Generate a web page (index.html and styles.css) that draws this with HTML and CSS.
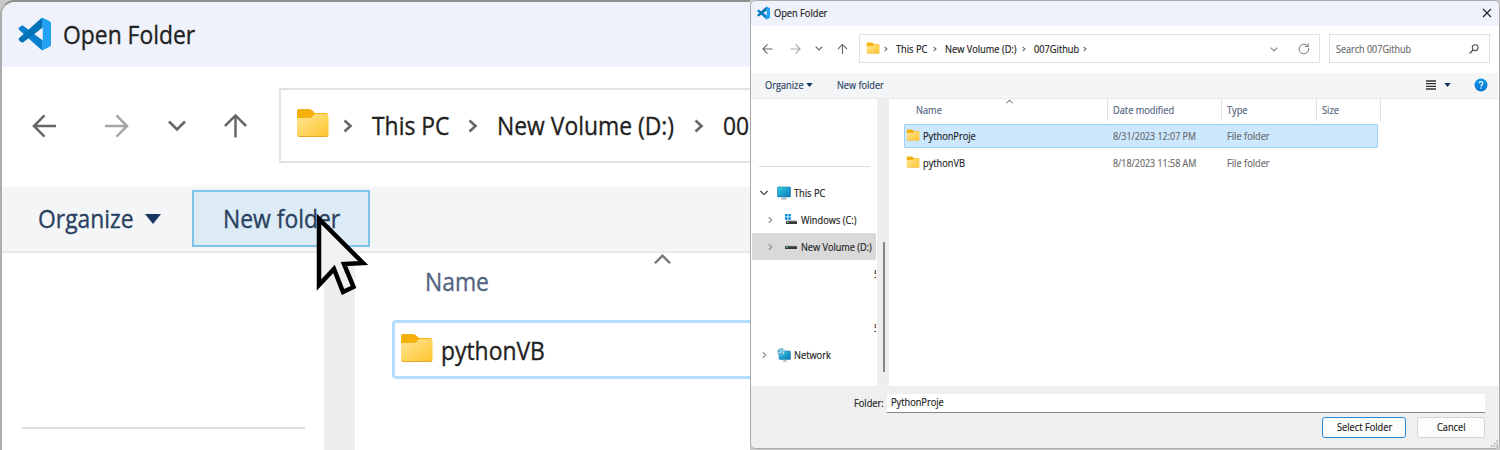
FILE: index.html
```html
<!DOCTYPE html>
<html lang="en">
<head>
<meta charset="utf-8">
<title>Open Folder</title>
<link rel="stylesheet" href="styles.css">
</head>
<body>
<svg width="0" height="0" class="defs">
  <defs>
    <linearGradient id="gold" x1="0" y1="0" x2="1" y2="1"><stop offset="0" stop-color="#ffe694"/><stop offset="1" stop-color="#ffc52d"/></linearGradient>
    <linearGradient id="screen" x1="0" y1="0" x2="1" y2="1"><stop offset="0" stop-color="#35d0e4"/><stop offset="1" stop-color="#0873b8"/></linearGradient>
    <linearGradient id="help" x1="0" y1="0" x2="0" y2="1"><stop offset="0" stop-color="#0b9ae4"/><stop offset="1" stop-color="#0874cf"/></linearGradient>
    <symbol id="folder" viewBox="0 0 33 30">
      <path d="M1 3Q1 1 3 1H13Q15 1 17 3L19 5H30Q32 5 32 7V14H1Z" fill="#f4b00c"/>
      <path d="M1 10H14Q16 10 18 7Q18.600 6 20 6H31Q32.500 6 32.500 8V26Q32.500 29 30 29H3.500Q1 29 1 26Z" fill="url(#gold)"/>
      <path d="M1.500 27Q2 28.500 4 28.500H30Q32 28.500 32 27" stroke="#e8a72a" fill="none"/>
    </symbol>
    <symbol id="code" viewBox="0 0 100 100">
      <path d="M3 31L10 25Q13 23 16 25L75 70V98Q70 98 67 95L3 37Q0 34 3 31Z" fill="#0a7fd0"/>
      <path d="M3 69L10 75Q13 77 16 75L75 30V2Q70 2 67 5L3 63Q0 66 3 69Z" fill="#0072b5"/>
      <path d="M68 96Q72 101 78 98L96 89Q100 87 100 82V18Q100 13 96 11L78 2Q72 -1 68 4Q75 3 75 10V90Q75 97 68 96Z" fill="#22a2f2"/>
    </symbol>
    <symbol id="back" viewBox="0 0 26 24"><path d="M25 12H2M13 1L2 12L13 23" fill="none" stroke="currentColor" stroke-width="2.600"/></symbol>
    <symbol id="down" viewBox="0 0 18 12"><path d="M1 1.500L9 9.500L17 1.500" fill="none" stroke="currentColor" stroke-width="2.600"/></symbol>
    <symbol id="right" viewBox="0 0 10 14"><path d="M1.500 1.500L7.500 7L1.500 12.500" fill="none" stroke="currentColor" stroke-width="2.600"/></symbol>
    <symbol id="caret" viewBox="0 0 16 10"><path d="M0 0H16L8 10Z" fill="#17365f"/></symbol>
    <symbol id="pc" viewBox="0 0 14 14">
      <rect x=".5" y="1" width="13" height="10" rx=".8" fill="url(#screen)" stroke="#17739a" stroke-width=".6"/>
      <path d="M5.500 11.500H8.500V12.700H10V13.500H4V12.700H5.500Z" fill="#9badb8"/>
    </symbol>
    <symbol id="drive" viewBox="0 0 12 5"><path d="M1.500 0H10.500L12 1.500H0Z" fill="#c8c8c8"/><path d="M0 1.300H12V4H0Z" fill="#383838"/><rect x="1" y="2" width="2" height="1" fill="#42bd61"/></symbol>
  </defs>
</svg>
<main class="board">
  <section class="dialog large">
    <header class="title"><svg class="logo"><use href="#code"/></svg><span class="t">Open Folder</span></header>
    <nav class="nav">
      <svg class="arrow"><use href="#back"/></svg>
      <svg class="arrow flip"><use href="#back"/></svg>
      <svg class="chev"><use href="#down"/></svg>
      <svg class="arrow up"><use href="#back"/></svg>
      <div class="address">
        <svg class="folder"><use href="#folder"/></svg>
        <svg class="sep"><use href="#right"/></svg><span class="t pc">This PC</span>
        <svg class="sep"><use href="#right"/></svg><span class="t vol">New Volume (D:)</span>
        <svg class="sep"><use href="#right"/></svg><span class="t">007Github</span>
      </div>
    </nav>
    <div class="tools">
      <span class="t organize">Organize</span><svg class="caret"><use href="#caret"/></svg>
      <button class="hot"><span class="t">New folder</span></button>
      <svg class="pointer" viewBox="0 0 54 82"><path d="M5 6V72L20 56L29 79L39.500 74L30 51L49 50Z" fill="#eff1f3" stroke="#000" stroke-width="4.500"/></svg>
    </div>
    <div class="body">
      <aside class="side"><hr></aside>
      <div class="track"></div>
      <div class="files">
        <svg class="sort"><use href="#down"/></svg>
        <div class="heading"><span class="t">Name</span></div>
        <div class="file"><svg class="folder"><use href="#folder"/></svg><span class="t">pythonVB</span></div>
      </div>
    </div>
  </section>

  <section class="dialog small">
    <header class="title"><svg class="logo"><use href="#code"/></svg><span class="t">Open Folder</span>
      <svg class="close" viewBox="0 0 10 10"><path d="M1 1L9 9M9 1L1 9" stroke="#222" stroke-width="1.100"/></svg></header>
    <nav class="nav">
      <svg class="arrow"><use href="#back"/></svg>
      <svg class="arrow flip"><use href="#back"/></svg>
      <svg class="chev"><use href="#down"/></svg>
      <svg class="arrow up"><use href="#back"/></svg>
      <div class="address">
        <svg class="folder"><use href="#folder"/></svg>
        <svg class="sep"><use href="#right"/></svg><span class="t pc">This PC</span>
        <svg class="sep"><use href="#right"/></svg><span class="t vol">New Volume (D:)</span>
        <svg class="sep"><use href="#right"/></svg><span class="t git">007Github</span>
        <svg class="sep"><use href="#right"/></svg>
        <svg class="chev drop"><use href="#down"/></svg>
        <svg class="reload" viewBox="0 0 12 12"><path d="M10.600 5.200A4.800 4.800 0 1 1 8.800 2.200L10.300 3.500M10.300 .5V3.600H7.200" fill="none" stroke="#777"/></svg>
      </div>
      <div class="search"><span class="t">Search 007Github</span>
        <svg class="lens" viewBox="0 0 10 10"><circle cx="6.200" cy="3.700" r="2.900" fill="none" stroke="#555" stroke-width="1.100"/><path d="M4.200 5.800L.7 9.400" stroke="#555" stroke-width="1.400"/></svg></div>
    </nav>
    <div class="tools">
      <span class="t organize">Organize</span><svg class="caret"><use href="#caret"/></svg>
      <span class="t newf">New folder</span>
      <svg class="lines" viewBox="0 0 10 10"><path d="M0 1H10M0 3.600H10M0 6.300H10M0 9H10" stroke="#333" stroke-width="1.300"/></svg>
      <svg class="caret view"><use href="#caret"/></svg>
      <svg class="help" viewBox="0 0 14 14"><circle cx="7" cy="7" r="6.500" fill="url(#help)"/><path d="M5.200 5.300Q5.300 3.700 7 3.700T8.800 5.300Q8.700 6.300 7.700 6.900Q7 7.400 7 8.400M7 9.500V10.700" fill="none" stroke="#fff" stroke-width="1.200"/></svg>
    </div>
    <div class="body">
      <aside class="side">
        <hr>
        <div class="node"><svg class="chev open"><use href="#down"/></svg><svg class="pcicon"><use href="#pc"/></svg><span class="t">This PC</span></div>
        <div class="node sub"><svg class="sep"><use href="#right"/></svg>
          <svg class="win" viewBox="0 0 12 12"><path d="M0 1H2.500V3.500H0ZM3.300 1H5.800V3.500H3.300ZM0 4.300H2.500V6.800H0ZM3.300 4.300H5.800V6.800H3.300Z" fill="#078bdd"/><path d="M2 7H10.500L12 8.500H1Z" fill="#c8c8c8"/><path d="M1 8.200H12V11H1Z" fill="#383838"/><rect x="2" y="9" width="2" height="1" fill="#42bd61"/></svg>
          <span class="t">Windows (C:)</span></div>
        <div class="node sub chosen"><svg class="sep"><use href="#right"/></svg><svg class="drive"><use href="#drive"/></svg><span class="t">New Volume (D:)</span></div>
        <div class="node cut"><span class="t">5</span></div>
        <div class="node"></div>
        <div class="node cut"><span class="t">5</span></div>
        <div class="node net"><svg class="sep"><use href="#right"/></svg>
          <svg class="pcicon" viewBox="0 0 14 14"><rect x="2" y="3" width="11.500" height="8.500" rx=".8" fill="url(#screen)" stroke="#17739a" stroke-width=".5"/><path d="M6.500 11.700H9V12.900H10.500V13.600H5V12.900H6.500Z" fill="#9badb8"/><circle cx="4.200" cy="4" r="3.700" fill="#54aed3"/><path d="M2 1.500L4.500 2.500L3.500 5L1 4.500M5.500 1L7 3L6 6" fill="none" stroke="#c5e9f1"/></svg>
          <span class="t">Network</span></div>
      </aside>
      <div class="track"><div class="thumb"></div></div>
      <div class="files">
        <svg class="sort"><use href="#down"/></svg>
        <div class="cols heading"><span class="t">Name</span><span class="cell"><span class="t">Date modified</span></span><span class="cell"><span class="t">Type</span></span><span class="cell"><span class="t">Size</span></span><span class="cell"></span></div>
        <div class="cols file picked"><svg class="folder"><use href="#folder"/></svg><span class="t">PythonProje</span><span class="t meta date">8/31/2023 12:07 PM</span><span class="t meta">File folder</span></div>
        <div class="cols file"><svg class="folder"><use href="#folder"/></svg><span class="t">pythonVB</span><span class="t meta date">8/18/2023 11:58 AM</span><span class="t meta">File folder</span></div>
      </div>
    </div>
    <footer class="foot">
      <div class="entry"><span class="t label">Folder:</span><div class="input"><span class="t">PythonProje</span></div></div>
      <div class="actions"><button class="btn main"><span class="t">Select Folder</span></button><button class="btn"><span class="t">Cancel</span></button></div>
      <svg class="grip" viewBox="0 0 8 8"><path d="M6 0H8V2H6ZM3 3H5V5H3ZM6 3H8V5H6ZM0 6H2V8H0ZM3 6H5V8H3ZM6 6H8V8H6Z" fill="#bbb"/></svg>
    </footer>
  </section>
</main>
</body>
</html>
```

FILE: styles.css
```css
* { box-sizing: border-box; }
body { margin: 0; font-family: "Open Sans", "Noto Sans", sans-serif; color: #222; }
svg, .t { display: block; flex: none; }
.defs { position: absolute; }
.board { display: flex; width: 1500px; height: 450px; overflow: hidden; background: #c9c9c9; }
.dialog { flex: none; display: flex; flex-direction: column; overflow: hidden; background: #fff; }
.t { white-space: nowrap; transform: scaleX(var(--sx)); transform-origin: 0 50%; -webkit-text-stroke: var(--ink) currentColor; }
.title, .nav, .tools, .address, .search, .file, .node, .entry, .actions { display: flex; align-items: center; flex: none; }
.title { background: #eff2fb; }
.tools { background: #f4f5f7; color: #29415f; position: relative; }
.body { display: flex; flex: 1; min-height: 0; }
.side, .track, .files { flex: none; }
.track { background: #eee; }
.flip { transform: scaleX(-1); }
.up { transform: rotate(90deg); }
.arrow, .chev { color: #666; }
.flip.arrow { color: #a5a5a5; }
.sep { color: #666; }
.heading { color: #536480; }
hr { border: 0; background: #dcdcdc; margin: 0; }
button { font: inherit; color: inherit; padding: 0; display: flex; align-items: center; }

/* magnified dialog */
.large { --sx: .88; --ink: .35px; width: 750px; height: 450px; font-size: 26px; line-height: 36px; border-left: 2px solid #adadad; border-top: 2px solid #8e8e8e; border-top-left-radius: 15px; }
.large .title { height: 65px; padding: 0 0 1px 16px; }
.large .logo { width: 33px; height: 36px; margin-right: 12px; }
.large .nav { height: 120px; padding: 0 0 3px 30px; }
.large .arrow { width: 25px; height: 24px; margin-right: 47px; }
.large .arrow.flip { margin-right: 39px; }
.large .chev { width: 18px; height: 12px; margin-right: 37px; }
.large .arrow.up { margin-right: 31px; }
.large .address { width: 700px; height: 75px; border: 2px solid #e2e2e2; padding: 0 0 2px 15px; flex: none; }
.large .folder { width: 33px; height: 30px; }
.large .address .folder { margin: -3px 14px 0 0; }
.large .sep { width: 10px; height: 14px; margin-right: 19px; margin-top: 2px; }
.large .pc { width: 96px; }
.large .vol { width: 197px; }
.large .tools { height: 66px; border-bottom: 2px solid #e7e9eb; padding-left: 36px; }
.large .organize { width: 107px; margin-top: -3px; }
.large .caret { width: 16px; height: 10px; margin-right: 31px; }
.hot { width: 178px; height: 57px; border: 2px solid #7fc4e8; background: #dcebf5; padding: 0 0 2px 29px; margin-top: -1px; border-radius: 0; }
.pointer { position: absolute; left: 312px; top: 26px; width: 54px; height: 82px; z-index: 2; }
.large .side { width: 322px; padding: 174px 19px 0 20px; }
.large hr { height: 2px; }
.large .track { width: 31px; margin-right: 6px; }
.large .files { width: 400px; padding-left: 31px; }
.large .sort { width: 17px; height: 12px; margin-left: 262px; transform: scaleY(-1); color: #777; }
.large .heading { padding-left: 33px; margin-top: -2px; }
.large .file { margin-top: 21px; width: 500px; height: 59px; border: 3px solid #b3dcff; border-radius: 4px; padding: 0 0 0 5px; }
.large .file .folder { margin: -4px 8px 0 0; }

/* complete dialog */
.small { --sx: .84; --ink: .2px; width: 750px; height: 449px; font-size: 11px; line-height: 16px; border: 1px solid #aaa; border-radius: 6px; }
.small .title { height: 25px; padding: 0 0 2px 6px; }
.small .logo { width: 13px; height: 14px; margin-right: 4px; }
.small .close { width: 10px; height: 10px; margin-left: auto; margin-right: 7px; }
.small .title .t { width: 60px; }
.small .nav { height: 47px; padding: 0 0 2px 11px; }
.small .arrow { width: 11px; height: 10px; margin-right: 17px; }
.small .arrow.flip { margin-right: 14px; }
.small .chev { width: 8px; height: 5px; margin-right: 14px; }
.small .arrow.up { margin-right: 11px; }
.small .address { width: 461px; height: 29px; border: 1px solid #e0e0e0; padding-left: 6px; margin-right: 9px; flex: none; }
.small .folder { width: 14px; height: 12px; }
.small .address .folder { margin: -2px 4px 0 0; }
.small .sep { width: 4px; height: 6px; margin-right: 8px; margin-top: 1px; }
.small .pc { width: 37px; }
.small .vol { width: 77px; }
.small .git { width: 49px; }
.small .drop { margin: 1px 20px 0 auto; color: #888; }
.reload { width: 12px; height: 12px; margin-right: 9px; }
.search { width: 161px; height: 29px; border: 1px solid #e0e0e0; padding-left: 6px; color: #6b6b6b; }
.lens { width: 10px; height: 10px; margin-left: auto; margin-right: 10px; }
.search .t { width: 80px; --sx: .82; }
.small .tools { height: 26px; border-bottom: 1px solid #e6e8ea; padding: 0 0 2px 14px; }
.small .organize { width: 41px; }
.small .caret { width: 7px; height: 4px; margin-right: 24px; }
.small .newf { width: 60px; --sx: .83; }
.lines { width: 10px; height: 10px; margin-left: auto; margin-right: 8px; }
.small .caret.view { margin-right: 23px; }
.help { width: 14px; height: 14px; margin-right: 11px; }
.small .side { width: 126px; padding: 67px 0 0 1px; overflow: hidden; }
.small hr { height: 1px; width: 111px; margin: 0 0 12px 7px; }
.node { height: 27px; padding-left: 8px; width: 124px; }
.small .node .sep { margin: 0 10px 0 2px; color: #999; width: 5px; height: 8px; }
.small .open { width: 8px; height: 6px; margin: 0 9px 0 0; color: #333; }
.pcicon { width: 14px; height: 14px; margin-right: 3px; }
.node.sub { padding-left: 14px; }
.drive, .win { width: 12px; margin: 0 4px 0 2px; }
.drive { height: 5px; margin-top: 2px; }
.win { height: 12px; margin-top: -2px; }
.chosen { background: #d9d9d9; border-radius: 2px; }
.chosen .t { --sx: .83; }
.cut { padding-left: 122px; overflow: hidden; }
.node.net { padding-left: 8px; }
.small .track { width: 12px; padding: 143px 4px 0 6px; }
.thumb { width: 2px; height: 130px; background: #858585; }
.small .files { width: 610px; padding-left: 15px; }
.small .sort { width: 7px; height: 5px; margin-left: 102px; transform: scaleY(-1); color: #777; }
.cols { display: grid; align-items: center; }
.small .heading { grid-template-columns: 191px 114px 95px 64px 1px; height: 22px; padding-left: 12px; margin-top: -5px; }
.cell { border-left: 1px solid #e4e4e4; height: 22px; padding: 3px 0 0 5px; }
.small .file { display: grid; grid-template-columns: 16px 190px 114px 95px; width: 474px; height: 24px; border: 1px solid transparent; padding-left: 2px; margin-top: 3px; }
.small .picked { background: #cce8ff; border-color: #9fd1f7; margin-top: 3px; border-radius: 1px; }
.small .file .folder { margin-top: -2px; margin-left: -1px; }
.meta { color: #6b6b6b; }
.date { --sx: .81; }
.foot { height: 62px; background: #efefef; position: relative; padding-top: 7px; flex: none; }
.entry { padding-left: 103px; height: 20px; }
.label { width: 33px; }
.input { width: 598px; height: 19px; background: #fff; border-bottom: 1px solid #888; padding: 0 0 0 4px; }
.actions { padding-left: 571px; gap: 11px; margin-top: 4px; }
.btn { height: 21px; width: 68px; border: 1px solid #d4d4d4; border-radius: 3px; background: #fdfdfd; padding: 0 0 1px 19px; }
.btn.main { width: 84px; border-color: #2589d8; padding-left: 14px; }
.grip { position: absolute; right: 1px; bottom: 1px; width: 7px; height: 7px; }
```
